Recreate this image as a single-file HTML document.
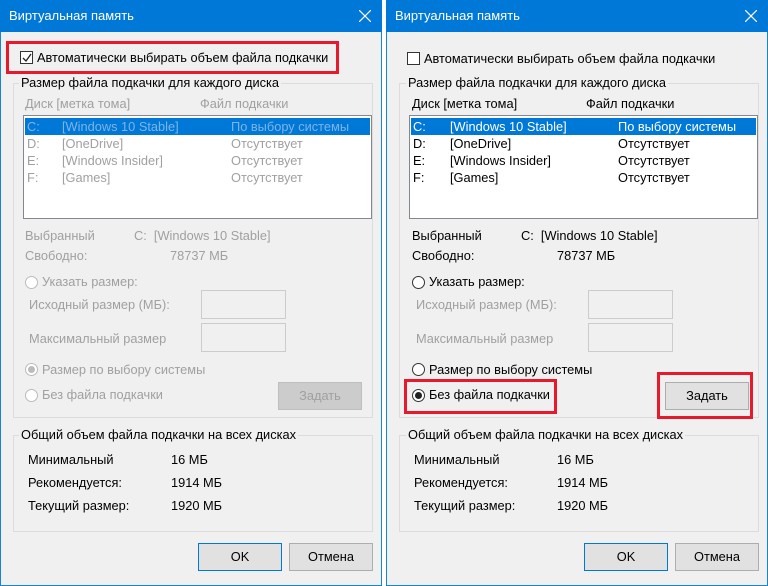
<!DOCTYPE html>
<html><head><meta charset="utf-8"><style>
*{margin:0;padding:0;box-sizing:border-box}
body{width:768px;height:586px;background:#fff;position:relative;overflow:hidden;font-family:"Liberation Sans",sans-serif;font-size:12.8px;color:#000}
.win{position:absolute;top:0;width:382px;height:586px;background:#f0f0f0;border:1px solid #1883d7;border-top:none}
.tb{position:absolute;left:-1px;right:-1px;top:0;height:32px;background:#0078d7;color:#fff;font-size:13px}
.tb .t{position:absolute;left:9px;top:8px}
.tb svg{position:absolute;right:11px;top:10px}
.a{position:absolute;line-height:16px;white-space:nowrap}
.g{color:#a0a0a0}
.grp{position:absolute;border:1px solid #dcdcdc}
.gl{position:absolute;background:#f0f0f0;padding:0 2px;line-height:16px}
.list{position:absolute;left:22px;top:115px;width:349px;height:104px;background:#fff;border:1px solid #828790}
.sel{position:absolute;left:1px;top:2px;width:345px;height:17px;background:#0078d7}
.inp{position:absolute;width:85px;height:29px;border:1px solid #cccccc;background:#f0f0f0}
.btn{position:absolute;width:84px;height:28px;background:#e1e1e1;border:1px solid #adadad;text-align:center;line-height:26px}
.rad{position:absolute;width:13px;height:13px;border:1px solid #333;border-radius:50%;background:#fff}
.red{position:absolute;border:3px solid #e8192c}
</style></head><body>

<!-- LEFT -->
<div class="win" style="left:0">
<div class="tb"><span class="t">Виртуальная память</span><svg width="12" height="12"><path d="M0 0L12 12M12 0L0 12" stroke="#fff" stroke-width="1.2"/></svg></div>
<div class="red" style="left:5px;top:41px;width:333px;height:33px"></div>
<div style="position:absolute;left:19px;top:51px;width:13px;height:13px;border:1px solid #333;background:#fff"></div>
<svg style="position:absolute;left:21px;top:53px" width="10" height="10"><path d="M1 5L4 8L9 1" stroke="#222" stroke-width="1.3" fill="none"/></svg>
<div class="a" style="left:36px;top:50px">Автоматически выбирать объем файла подкачки</div>
<div class="grp" style="left:12px;top:83px;width:360px;height:335px"></div>
<div class="gl" style="left:18px;top:75px">Размер файла подкачки для каждого диска</div>
<div class="a g" style="left:24px;top:96px">Диск [метка тома]</div>
<div class="a g" style="left:199px;top:96px">Файл подкачки</div>
<div class="list"><div class="sel"></div>
<div class="a" style="left:3px;top:3px;color:#7fb4e6">C:</div><div class="a" style="left:38px;top:3px;color:#7fb4e6">[Windows 10 Stable]</div><div class="a" style="left:207px;top:3px;color:#7fb4e6">По выбору системы</div>
<div class="a g" style="left:3px;top:20px">D:</div><div class="a g" style="left:38px;top:20px">[OneDrive]</div><div class="a g" style="left:207px;top:20px">Отсутствует</div>
<div class="a g" style="left:3px;top:37px">E:</div><div class="a g" style="left:38px;top:37px">[Windows Insider]</div><div class="a g" style="left:207px;top:37px">Отсутствует</div>
<div class="a g" style="left:3px;top:54px">F:</div><div class="a g" style="left:38px;top:54px">[Games]</div><div class="a g" style="left:207px;top:54px">Отсутствует</div>
</div>
<div class="a g" style="left:24px;top:228px">Выбранный</div>
<div class="a g" style="left:133px;top:228px">C:&nbsp; [Windows 10 Stable]</div>
<div class="a g" style="left:24px;top:248px">Свободно:</div>
<div class="a g" style="left:169px;top:248px">78737 МБ</div>
<div class="rad" style="left:24px;top:276px;border-color:#bbb"></div>
<div class="a g" style="left:41px;top:274px">Указать размер:</div>
<div class="a g" style="left:28px;top:297px">Исходный размер (МБ):</div>
<div class="inp" style="left:200px;top:290px"></div>
<div class="a g" style="left:28px;top:331px">Максимальный размер</div>
<div class="inp" style="left:200px;top:323px"></div>
<div class="rad" style="left:24px;top:363px;border-color:#bbb"><div style="position:absolute;left:2px;top:2px;width:7px;height:7px;border-radius:50%;background:#bbb"></div></div>
<div class="a g" style="left:41px;top:362px">Размер по выбору системы</div>
<div class="rad" style="left:24px;top:389px;border-color:#bbb"></div>
<div class="a g" style="left:41px;top:387px">Без файла подкачки</div>
<div class="btn g" style="left:277px;top:382px;border-color:#bfbfbf;background:#ccc">Задать</div>
<div class="grp" style="left:12px;top:435px;width:360px;height:97px"></div>
<div class="gl" style="left:18px;top:427px">Общий объем файла подкачки на всех дисках</div>
<div class="a" style="left:27px;top:452px">Минимальный</div><div class="a" style="left:170px;top:452px">16 МБ</div>
<div class="a" style="left:27px;top:475px">Рекомендуется:</div><div class="a" style="left:170px;top:475px">1914 МБ</div>
<div class="a" style="left:27px;top:498px">Текущий размер:</div><div class="a" style="left:170px;top:498px">1920 МБ</div>
<div class="btn" style="left:197px;top:543px;border:1px solid #0078d7">OK</div>
<div class="btn" style="left:288px;top:543px">Отмена</div>
</div>

<!-- RIGHT -->
<div class="win" style="left:386px">
<div class="tb"><span class="t">Виртуальная память</span><svg width="12" height="12"><path d="M0 0L12 12M12 0L0 12" stroke="#fff" stroke-width="1.2"/></svg></div>
<div style="position:absolute;left:20px;top:52px;width:13px;height:13px;border:1px solid #333;background:#fff"></div>
<div class="a" style="left:37px;top:51px">Автоматически выбирать объем файла подкачки</div>
<div class="grp" style="left:12px;top:83px;width:360px;height:335px"></div>
<div class="gl" style="left:19px;top:75px">Размер файла подкачки для каждого диска</div>
<div class="a" style="left:25px;top:96px">Диск [метка тома]</div>
<div class="a" style="left:199px;top:96px">Файл подкачки</div>
<div class="list"><div class="sel"></div>
<div class="a" style="left:3px;top:3px;color:#fff">C:</div><div class="a" style="left:40px;top:3px;color:#fff">[Windows 10 Stable]</div><div class="a" style="left:208px;top:3px;color:#fff">По выбору системы</div>
<div class="a" style="left:3px;top:20px">D:</div><div class="a" style="left:40px;top:20px">[OneDrive]</div><div class="a" style="left:208px;top:20px">Отсутствует</div>
<div class="a" style="left:3px;top:37px">E:</div><div class="a" style="left:40px;top:37px">[Windows Insider]</div><div class="a" style="left:208px;top:37px">Отсутствует</div>
<div class="a" style="left:3px;top:54px">F:</div><div class="a" style="left:40px;top:54px">[Games]</div><div class="a" style="left:208px;top:54px">Отсутствует</div>
</div>
<div class="a" style="left:25px;top:228px">Выбранный</div>
<div class="a" style="left:134px;top:228px">C:&nbsp; [Windows 10 Stable]</div>
<div class="a" style="left:25px;top:248px">Свободно:</div>
<div class="a" style="left:170px;top:248px">78737 МБ</div>
<div class="rad" style="left:25px;top:276px"></div>
<div class="a" style="left:42px;top:274px">Указать размер:</div>
<div class="a g" style="left:29px;top:297px">Исходный размер (МБ):</div>
<div class="inp" style="left:201px;top:290px"></div>
<div class="a g" style="left:29px;top:331px">Максимальный размер</div>
<div class="inp" style="left:201px;top:323px"></div>
<div class="rad" style="left:25px;top:363px"></div>
<div class="a" style="left:42px;top:362px">Размер по выбору системы</div>
<div class="rad" style="left:25px;top:389px"><div style="position:absolute;left:2px;top:2px;width:7px;height:7px;border-radius:50%;background:#222"></div></div>
<div class="a" style="left:42px;top:387px">Без файла подкачки</div>
<div class="red" style="left:17px;top:379px;width:153px;height:35px"></div>
<div class="btn" style="left:278px;top:382px">Задать</div>
<div class="red" style="left:270px;top:372px;width:96px;height:47px"></div>
<div class="grp" style="left:12px;top:435px;width:360px;height:97px"></div>
<div class="gl" style="left:19px;top:427px">Общий объем файла подкачки на всех дисках</div>
<div class="a" style="left:27px;top:452px">Минимальный</div><div class="a" style="left:170px;top:452px">16 МБ</div>
<div class="a" style="left:27px;top:475px">Рекомендуется:</div><div class="a" style="left:170px;top:475px">1914 МБ</div>
<div class="a" style="left:27px;top:498px">Текущий размер:</div><div class="a" style="left:170px;top:498px">1920 МБ</div>
<div class="btn" style="left:197px;top:543px;border:1px solid #0078d7">OK</div>
<div class="btn" style="left:288px;top:543px">Отмена</div>
</div>
</body></html>
